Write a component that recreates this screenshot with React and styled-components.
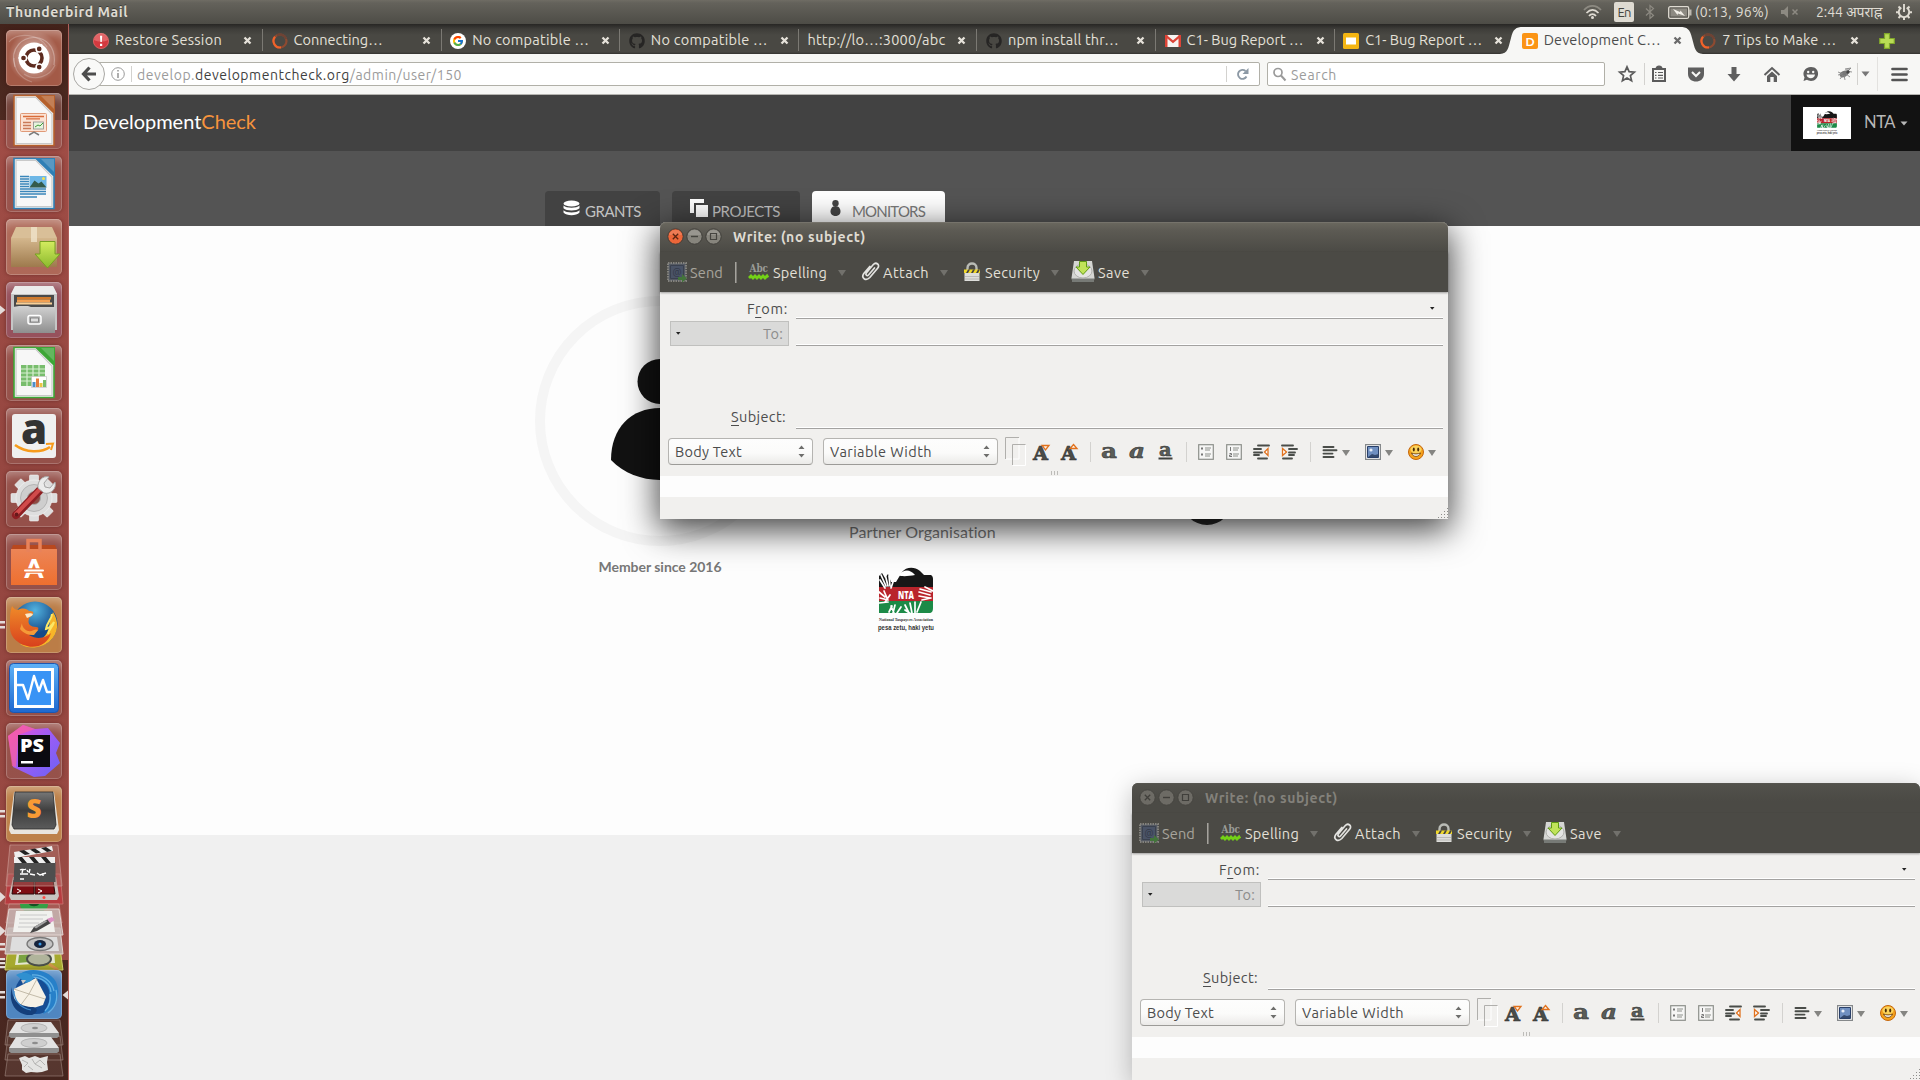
import React, { useLayoutEffect, useRef, useState } from "react";
import styled, { createGlobalStyle, css } from "styled-components";
import { FaGithub } from "react-icons/fa";
import { FcGoogle } from "react-icons/fc";

const uiFont = `"Ubuntu", "Noto Sans", "Open Sans", "Noto Sans Devanagari", sans-serif`;
const siteFont = `Lato, "Open Sans", sans-serif`;

const Global = createGlobalStyle`
  * { box-sizing: border-box; }
  body { margin: 0; background: #f0f0f0; overflow: hidden; }
  svg { display: block; flex: none; overflow: visible; }
`;

/* ---------- text that keeps a given width ---------- */
const FitSpan = styled.span`
  display: inline-block;
  white-space: pre;
  flex: none;
`;
function Fit({ w, children }) {
  const ref = useRef(null);
  const [ls, setLs] = useState(0);
  useLayoutEffect(() => {
    const el = ref.current;
    const n = Math.max(1, el.textContent.length);
    setLs((w - el.getBoundingClientRect().width) / n);
  }, [w]);
  return (
    <FitSpan ref={ref} style={{ letterSpacing: `${ls}px` }}>
      {children}
    </FitSpan>
  );
}

/* ---------- desktop ---------- */
const Desktop = styled.div`
  position: relative;
  width: 1920px;
  height: 1080px;
  overflow: hidden;
  display: flex;
  flex-direction: column;
  font-family: ${uiFont};
  font-size: 14.5px;
  line-height: 20px;
`;
const TopBar = styled.header`
  height: 24px;
  flex: none;
  display: flex;
  align-items: center;
  justify-content: space-between;
  padding: 0 8px 0 6px;
  color: #dfdbd2;
  background: linear-gradient(#6f6c64 0, #64625b 12%, #4d4c46 100%);
`;
const AppName = styled.div`
  font-weight: 600;
  font-size: 14px;
  text-shadow: 0 -1px 0 rgba(0, 0, 0, 0.4);
`;
const Indicators = styled.div`
  display: flex;
  align-items: center;
  height: 24px;
  font-size: 14px;
`;
const Slot = styled.div`
  width: ${(p) => p.$w}px;
  display: flex;
  align-items: center;
  flex: none;
`;
const Lang = styled.div`
  width: 20px;
  height: 20px;
  border-radius: 2px;
  background: #dfdbd2;
  color: #45443f;
  display: flex;
  align-items: center;
  justify-content: center;
  font-size: 13px;
`;
const Workspace = styled.div`
  flex: 1;
  min-height: 0;
  display: flex;
`;

/* ---------- launcher ---------- */
const LauncherBar = styled.nav`
  width: 69px;
  flex: none;
  display: flex;
  flex-direction: column;
  padding: 6px 0 0 6px;
  border-right: 1px solid #b0605b;
  background: linear-gradient(
    #43231b 0,
    #4f2b22 96px,
    #a04d46 96px,
    #944640 500px,
    #9a4a44 936px,
    #4d2a22 936px,
    #45251e 100%
  );
`;
const Tile = styled.div`
  position: relative;
  width: 56px;
  height: ${(p) => p.$h || 56}px;
  margin-bottom: ${(p) => (p.$gap === undefined ? 7 : p.$gap)}px;
  flex: none;
  border-radius: 5px;
  display: flex;
  align-items: center;
  justify-content: center;
  background: ${(p) => p.$bg || "rgba(150,90,82,.55)"};
  box-shadow: inset 0 0 0 1px rgba(255, 255, 255, 0.2), inset 0 9px 10px -5px rgba(255, 255, 255, 0.35),
    0 0 4px rgba(60, 15, 10, 0.45);
`;
const Pips = styled.svg`
  position: absolute;
  left: -6px;
  top: calc(50% - 5px);
`;
const FocusMark = styled.svg`
  position: absolute;
  right: -6px;
  top: calc(50% - 5px);
`;
const Running = () => (
  <Pips width="6" height="10">
    <path d="M0 .5 5.5 5 0 9.5z" fill="#e4dcda" />
  </Pips>
);
const RunningTwo = () => (
  <Pips width="6" height="10">
    <path d="M0 1h5v2.5H0zM0 6h5v2.5H0z" fill="#e4dcda" />
  </Pips>
);

const UbuntuIcon = () => (
  <svg width="56" height="56" viewBox="0 0 56 56">
    <defs>
      <radialGradient id="ub">
        <stop offset="0" stopColor="#fff" stopOpacity=".75" />
        <stop offset="1" stopColor="#fff" stopOpacity="0" />
      </radialGradient>
    </defs>
    <circle cx="28" cy="27" r="26" fill="url(#ub)" />
    <path d="M9 37C3 18 17 5 33 8c11 3 17 13 15 27" fill="none" stroke="#fff" strokeOpacity=".3" strokeWidth="1.2" />
    <path d="M3 12c8-10 30-9 38 5M18 44c12 8 26 2 31-9M8 28c0 14 9 21 18 24" fill="none" stroke="#fff" strokeOpacity=".22" strokeWidth="1.2" />
    <circle cx="28" cy="28" r="15.5" fill="#fff" />
    <circle cx="28" cy="28" r="8" fill="none" stroke="#5d2b1f" strokeWidth="3.6" />
    <g stroke="#fff" strokeWidth="1.5" fill="#5d2b1f">
      <path d="M24 28H12M30 24.5l6-10.4M30 31.5l6 10.4" strokeWidth="1.2" fill="none" />
      <circle cx="17.5" cy="28" r="3.1" />
      <circle cx="33.2" cy="18.9" r="3.1" />
      <circle cx="33.2" cy="37.1" r="3.1" />
    </g>
  </svg>
);
const DocIcon = ({ color, kind }) => (
  <svg width="56" height="56" viewBox="0 0 56 56">
    <path d="M8 2.5h22L48 20v32.500H8z" fill="#f7f7f7" stroke={color} strokeWidth="1.6" />
    <path d="M10 4.500h20L46 21v29.500H10z" fill="none" stroke="#c9c9c9" strokeWidth="1.2" />
    <path d="M30 2h19v19z" fill={color} />
    <path d="M35 3h13v13z" fill="#fff" opacity=".2" />
    {kind === "slides" && (
      <g>
        <rect x="14.500" y="20.500" width="26" height="18" rx="1" fill="#fbe3d5" stroke="#e09a78" />
        <path d="M17 23.500h21M20 25.800h14" stroke="#d96c3a" strokeWidth="1.3" />
        <path d="M17 29.500h8M17 32.500h8M17 35.500h8" stroke="#c97a58" strokeWidth="1.3" />
        <rect x="27.500" y="29" width="10" height="7" fill="#e7f3de" stroke="#8a8a8a" strokeWidth=".8" />
        <path d="m29 34 3-2 2 1 3-3" fill="none" stroke="#3f9d35" />
        <path d="m23 42 5-3 5 3" fill="none" stroke="#7c7c7c" strokeWidth="1.500" />
      </g>
    )}
    {kind === "text" && (
      <g>
        <path d="M14 20.500h9M14 23h9M14 25.500h9M14 28h9M14 30.500h9M14 33h26M14 35.500h26M14 38h26M14 41h17" stroke="#3a86ba" strokeWidth="1.300" />
        <rect x="23.500" y="20" width="17" height="11.500" fill="#6db7e6" />
        <path d="m23.500 31.500 5-7 4 3 3-2 5 6z" fill="#345b4b" />
        <circle cx="37.500" cy="22.500" r="1.500" fill="#f4e04d" />
      </g>
    )}
    {kind === "sheet" && (
      <g>
        <path d="M15 20h24v21H15z" fill="#78bd6d" />
        <path d="M15 24h24M15 28h24M15 32h24M15 36h24M21 20v21M27 20v21M33 20v21" stroke="#d7efd2" strokeWidth="1.200" />
        <path d="M25.500 31.500h15v11h-15z" fill="#fff" stroke="#bbb" strokeWidth=".6" />
        <path d="M26.500 37h3v5h-3z" fill="#4d8fc9" />
        <path d="M30 33.500h3V42h-3z" fill="#e47d3d" />
        <path d="M33.500 38h3v4h-3z" fill="#e9c643" />
        <path d="M37 35h3v7h-3z" fill="#78bd6d" />
      </g>
    )}
  </svg>
);
const BoxIcon = () => (
  <svg width="56" height="56" viewBox="0 0 56 56">
    <defs>
      <linearGradient id="bx" x2="0" y2="1">
        <stop offset="0" stopColor="#d4b78d" />
        <stop offset="1" stopColor="#9e7a4d" />
      </linearGradient>
      <linearGradient id="gr" x2="0" y2="1">
        <stop offset="0" stopColor="#d3ec5f" />
        <stop offset="1" stopColor="#8ab82c" />
      </linearGradient>
    </defs>
    <path d="M10 8h36l5 11H5z" fill="#d9bf98" />
    <path d="M5 19h46v29H5z" fill="url(#bx)" />
    <path d="M25 8h6v15h-6z" fill="#efe3cb" opacity=".8" />
    <path d="M34 22.500h15V35h5L41.500 49 29 35h5z" fill="url(#gr)" stroke="#76a022" />
  </svg>
);
const CabinetIcon = () => (
  <svg width="56" height="56" viewBox="0 0 56 56">
    <defs>
      <linearGradient id="cb" x2="0" y2="1">
        <stop offset="0" stopColor="#d2d2d2" />
        <stop offset="1" stopColor="#8e8e8e" />
      </linearGradient>
    </defs>
    <path d="M9 4h38l4 8v36H5V12z" fill="#c6c6c6" />
    <path d="M9 4h38l4 8H5z" fill="#ebebeb" />
    <path d="M8 13h40v14H8z" fill="#4a4a4a" />
    <path d="M11 15h34v2.500H11z" fill="#d07a2d" />
    <path d="M11 17.500h33v3H11z" fill="#f2a052" />
    <path d="M10 20.500h36v2H10z" fill="#f8cf96" />
    <path d="M7 25l6-1h9l3 1h24v26H7z" fill="url(#cb)" />
    <rect x="22" y="33.500" width="13" height="8.500" rx="2" fill="#b3b3b3" stroke="#fff" strokeWidth="1.500" />
    <rect x="24.500" y="36" width="8" height="4" fill="#ddd" stroke="#777" strokeWidth=".8" />
  </svg>
);
const AmazonIcon = () => (
  <svg width="56" height="56" viewBox="0 0 56 56">
    <rect x="6" y="6" width="44" height="44" rx="3" fill="#f0f0f0" />
    <text x="28" y="36" textAnchor="middle" fontFamily="Open Sans, sans-serif" fontWeight="800" fontSize="42" fill="#333">a</text>
    <path d="M9 37c11 8 26 8 35 2" fill="none" stroke="#f79b1c" strokeWidth="2.600" />
    <path d="m40 36 7-.500-2 6.500" fill="none" stroke="#f79b1c" strokeWidth="2" />
  </svg>
);
const SettingsIcon = () => (
  <svg width="56" height="56" viewBox="0 0 56 56">
    <g fill="#dedede" stroke="#f3f3f3" strokeWidth=".6">
      {[0, 45, 90, 135].map((a) => (
        <rect key={a} x="23.500" y="4" width="9" height="46" rx="1" transform={`rotate(${a} 28 27)`} />
      ))}
      <circle cx="28" cy="27" r="18" />
    </g>
    <circle cx="28" cy="27" r="13.500" fill="#cecece" stroke="#b4b4b4" />
    <circle cx="28" cy="27" r="6.500" fill="#8e4a43" stroke="#aaa" />
    <path d="m10 44 24-25" stroke="#8e1f23" strokeWidth="8" strokeLinecap="round" />
    <path d="m10 43 24-25" stroke="#d14b4b" strokeWidth="4" strokeLinecap="round" />
    <path d="M32 17c-1-7 5-13 11-11l-5 6 1 4 5 1 5-6c2 6-4 13-11 11z" fill="#ebebeb" stroke="#a5a5a5" />
    <circle cx="10.500" cy="43.500" r="2" fill="#66191b" />
  </svg>
);
const SoftwareIcon = () => (
  <svg width="56" height="56" viewBox="0 0 56 56">
    <defs>
      <linearGradient id="sw" x2="0" y2="1">
        <stop offset="0" stopColor="#ec8557" />
        <stop offset="1" stopColor="#ee6f2f" />
      </linearGradient>
    </defs>
    <path d="M7 11h42l2 5H5z" fill="#b9481e" />
    <path d="M5 15h46v36H5z" fill="url(#sw)" />
    <path d="M22 18V6.500h12V18" fill="none" stroke="#e8825a" strokeWidth="3.500" />
    <text x="28" y="43.500" textAnchor="middle" fontFamily="Lato, sans-serif" fontWeight="900" fontSize="27" fill="#fff">A</text>
    <path d="M20 36.500h16" stroke="#ee7840" strokeWidth="4.500" />
    <path d="M19 36.500h18" stroke="#fff" strokeWidth="2" strokeLinecap="round" />
  </svg>
);
const FirefoxIcon = () => (
  <svg width="56" height="56" viewBox="0 0 56 56">
    <defs>
      <radialGradient id="ffb" cx=".5" cy=".2">
        <stop offset="0" stopColor="#52b3e0" />
        <stop offset="1" stopColor="#164a88" />
      </radialGradient>
      <linearGradient id="ffo" x2="0" y2="1">
        <stop offset="0" stopColor="#ef8b29" />
        <stop offset="1" stopColor="#d8401d" />
      </linearGradient>
    </defs>
    <circle cx="29" cy="27" r="22.500" fill="url(#ffb)" />
    <path d="M47 15c6 9 6 21-3 29-8 7-21 9-30 3 10 1 18-1 23-6 8-7 5-15 10-26z" fill="#f7b528" />
    <path d="M46 17c0 5-5 8-6 15 4-1 6-4 8-7-1 5-5 7-6 12" fill="none" stroke="#fce765" strokeWidth="2" />
    <path d="M6 9c2 3 4 4 6 4 5-3 9-1 11 1 4 0 5 1 4 3-1 3-4 3-4 5-2 5 2 8 7 8 2 0 3 1 2 3-3 4-9 5-9 5 8 5 17 3 22-2-3 11-14 16-24 13C9 46 3 38 4 27c0-8 0-12 2-18z" fill="url(#ffo)" />
    <path d="M19 17c3-1 7-1 8 0-1 3-5 3-6 4z" fill="#fbe9cb" />
    <path d="M14 32c4 5 9 6 14 6l4-5c-3-2-5 2-10 1-3-1-6-4-6-8z" fill="#f59a38" />
  </svg>
);
const MonitorIcon = () => (
  <svg width="56" height="56" viewBox="0 0 56 56">
    <defs>
      <linearGradient id="mo" x2="0" y2="1">
        <stop offset="0" stopColor="#5fb2f7" />
        <stop offset="1" stopColor="#1f68cf" />
      </linearGradient>
    </defs>
    <rect x="3.500" y="3.500" width="49" height="49" rx="4" fill="url(#mo)" stroke="#1b57b2" />
    <rect x="9.500" y="9.500" width="37" height="37" fill="#3893f5" stroke="#fff" strokeWidth="3" />
    <path d="M11 25h6l5 14 6-23 5 15 4-11 4 12h5" fill="none" stroke="#fff" strokeWidth="2.400" strokeLinejoin="round" />
  </svg>
);
const PhpStormIcon = () => (
  <svg width="56" height="56" viewBox="0 0 56 56">
    <defs>
      <linearGradient id="ps" x2="1" y2="1">
        <stop offset="0" stopColor="#f650cf" />
        <stop offset=".45" stopColor="#a15cf5" />
        <stop offset="1" stopColor="#6a62f6" />
      </linearGradient>
    </defs>
    <path d="M2 13 17 2l12 4 13-1 12 15-4 10 4 10-15 13-11 1-21-10z" fill="url(#ps)" />
    <path d="M2 13 17 2l12 4-17 6-2 32-4-1z" fill="#fa5f9d" opacity=".7" />
    <rect x="12" y="12" width="32" height="32" fill="#0b0a10" />
    <text x="14" y="29" fontFamily="Open Sans, sans-serif" fontWeight="800" fontSize="18" textLength="24" lengthAdjust="spacingAndGlyphs" fill="#fff">PS</text>
    <path d="M15 38h12v2.500H15z" fill="#fff" />
  </svg>
);
const SublimeIcon = () => (
  <svg width="56" height="56" viewBox="0 0 56 56">
    <defs>
      <linearGradient id="su" x2="0" y2="1">
        <stop offset="0" stopColor="#777" />
        <stop offset=".5" stopColor="#3e3e3e" />
        <stop offset="1" stopColor="#5b5b5b" />
      </linearGradient>
    </defs>
    <path d="M8 6h40l5 38-2 4H5l-2-4z" fill="#e9e5dd" />
    <path d="M9 6h38l3 33-2 4H8l-2-4z" fill="url(#su)" stroke="#2b2b2b" strokeWidth=".8" />
    <text x="28" y="31.500" textAnchor="middle" fontFamily="Open Sans, sans-serif" fontWeight="800" fontSize="26" fill="#f89a34">S</text>
  </svg>
);
const ThunderbirdIcon = () => (
  <svg width="56" height="49" viewBox="0 0 56 49">
    <circle cx="30" cy="23" r="21" fill="#164d94" />
    <path d="M14 4C23-3 43-1 50 12c6 13 0 27-13 32 5-8 8-14 6-24C40 10 29 6 20 8z" fill="#2780c9" />
    <path d="M20 8c10-3 24 2 25 14M26 5c10-1 20 6 22 16M42 43c8-6 10-14 8-23M44 24c1 7-1 13-5 17" fill="none" stroke="#63b0e4" strokeWidth="1.300" />
    <path d="m8 19 22-11 10 19-3 8-16 5-13-6z" fill="#f6f1e6" />
    <path d="m8 19 15 5 8-15M23 24l-9 12M23 24l16 5" fill="none" stroke="#c3bba9" />
    <path d="M6 17c-1 14 9 20 21 20 7 1 3 8-2 8C12 46 1 34 6 17z" fill="#143f7b" />
    <path d="M8 21c0 9 6 17 17 19" fill="none" stroke="#3f8cce" strokeWidth="1.200" />
    <path d="M10 5c7-4 14-2 18 3-5 6-10 6-13 1z" fill="#3090d0" />
    <path d="m15 10 2 4 3-4z" fill="#c8c8c8" />
  </svg>
);
const FoldedApps = styled.svg`
  margin: -5px 0 0 -6px;
`;
const Stack = () => (
  <FoldedApps width="68" height="126" viewBox="0 0 68 126">
    <g>
      {/* terminal */}
      <path d="M8 30h52l3 30H5z" fill="#b73c40" stroke="#cf7a76" strokeWidth=".7" />
      <path d="M13 33h43l3 19-2 4H11l-2-4z" fill="#c8c4c0" />
      <path d="M14 36h20v14H12zM35 36h18l2 14H35z" fill="#7e0d13" stroke="#2c0808" />
      <path d="m17 45 4 2-4 2M38 45l4 2-4 2" fill="none" stroke="#fff" />
      <circle cx="44" cy="53.500" r="1.500" fill="#ff4b43" />
      {/* clapper */}
      <path d="M10 1h48l4 41H6z" fill="#b07871" fillOpacity=".45" stroke="#d4a49d" strokeOpacity=".6" />
      <path d="M14.500 18h41v20H13.500z" fill="#4e4e4e" />
      <path d="M14 13h41v6H14z" fill="#eee" />
      <path d="m17 13 5 6h5l-5-6zM29 13l5 6h5l-5-6zM41 13l5 6h5l-5-6z" fill="#222" />
      <path d="m14 8 38-6 1 5-38 7z" fill="#eee" />
      <path d="m19 7 6 4 5-1-6-4zM30 5.500l6 4 5-1-6-4zM41 4l6 4 5-1-6-4z" fill="#222" />
      <path d="M20 26c3-2 3 1 6-1m-3 0-1 4m5-3 1 2m2-3-1 4M20 30h8m2 0 5 1m2-2 3 2 6-2M20 35h4M43 29v3" fill="none" stroke="#fff" strokeWidth="1.400" />
    </g>
    <g>
      {/* green face */}
      <path d="M9 60h50l3 19H6z" fill="#a85d58" fillOpacity=".9" stroke="#d4a49d" strokeOpacity=".6" />
      <path d="M20 60h28c0 6-6 11-14 11s-14-5-14-11z" fill="#35a046" />
      <path d="M29 60h10c-1 3-9 3-10 0z" fill="#184e25" />
      <path d="M17 70c2-6 7-4 8 1M51 70c-2-6-7-4-8 1" stroke="#a9945f" strokeWidth="2.500" fill="none" />
      {/* image viewer */}
      <path d="M8 104h52l3 22H5z" fill="#a6a92e" stroke="#d0d46c" />
      <path d="m17 108 37-2 1 13-40 2z" fill="#e4e7cf" />
      <path d="m19 111 12-1-2 8-11 1z" fill="#7ba341" />
      <ellipse cx="39" cy="115" rx="12" ry="6.500" fill="#b0b49b" stroke="#4a4f49" strokeWidth="2" />
      <path d="m49 120 9 6" stroke="#cf9449" strokeWidth="3" />
      {/* camera */}
      <path d="M8 84h52l3 26H5z" fill="#b9aaa6" stroke="#e3d4d0" />
      <path d="M12 93h45l2 14H10z" fill="#dedede" />
      <ellipse cx="40" cy="100" rx="13" ry="6.500" fill="#c4c4c4" stroke="#777" strokeWidth="1.300" />
      <ellipse cx="40" cy="100" rx="6" ry="4" fill="#16233c" />
      <circle cx="40" cy="100" r="1.500" fill="#3b9be8" />
      {/* text editor */}
      <path d="M9 65h50l4 26H5z" fill="#c9bcb9" fillOpacity=".8" stroke="#e3d4d0" />
      <path d="M16 67h36l3 21H13z" fill="#f1f1ee" />
      <path d="M20 71h27M19 75h24M19 79h20M18 83h16" stroke="#c8c8c8" />
      <path d="m30 89 4-6 14-8 3 4-14 8z" fill="#454545" />
      <path d="m34 83 12-7 1 1.500-11 7z" fill="#a3a3a3" />
      <path d="m47 75 5-2 3 3-5 3z" fill="#dd92c3" />
    </g>
    <path d="M0 48l5.500 5L0 58zM0 82l5.500 5L0 92zM0 99h5v2.500H0zM0 104h5v2.500H0zM0 114h5v2.200H0zM0 118h5v2.200H0zM0 122h5v2.200H0z" fill="#e4dcda" />
  </FoldedApps>
);
const Bottom = styled.svg`
  margin-left: -6px;
`;
const Drives = () => (
  <Bottom width="68" height="60" viewBox="0 0 68 60">
    <path d="M8 1h52l3 25H5zM8 17h52l3 24H5zM8 35h52l3 22H5z" fill="#9a7d75" fillOpacity=".2" stroke="#b09a92" strokeOpacity=".5" />
    {[1, 16].map((y) => (
      <g key={y} transform={`translate(0 ${y})`}>
        <path d="M16 2h35l8 11-2 4H11l-2-4z" fill="#e2e2e2" />
        <path d="M9 13h50v3.500l-2 1.500H11l-2-1.500z" fill="#8f8f8f" />
        <ellipse cx="34" cy="8" rx="13" ry="4.500" fill="#cfcfcf" stroke="#b5b5b5" />
        <ellipse cx="35" cy="8" rx="3" ry="1.300" fill="#8d8d8d" />
      </g>
    ))}
    <path d="m19 39 6-2 4 2 6-2 5 2 8-2-1 6 1 8-6 2-5 .500-6-.500-5 1-4-3 0-5z" fill="#e4e4e2" />
    <path d="m22 41 6 3-4 4m8-8 3 5 5-4m-5 4 7 4m-2-8 5 5m-17 1 5 4" fill="none" stroke="#b5b5b3" />
  </Bottom>
);

function Launcher() {
  return (
    <LauncherBar>
      <Tile $bg="#a35a47"><UbuntuIcon /></Tile>
      <Tile><DocIcon color="#b5602c" kind="slides" /></Tile>
      <Tile><DocIcon color="#2f7fb5" kind="text" /></Tile>
      <Tile $bg="rgba(180,115,95,.75)"><BoxIcon /></Tile>
      <Tile $bg="#96515c"><Running /><CabinetIcon /></Tile>
      <Tile><DocIcon color="#3da636" kind="sheet" /></Tile>
      <Tile><AmazonIcon /></Tile>
      <Tile><SettingsIcon /></Tile>
      <Tile><SoftwareIcon /></Tile>
      <Tile $bg="#bb7d47"><RunningTwo /><FirefoxIcon /></Tile>
      <Tile><MonitorIcon /></Tile>
      <Tile><PhpStormIcon /></Tile>
      <Tile $bg="#bd8149"><RunningTwo /><SublimeIcon /></Tile>
      <Stack />
      <Tile $h={49} $gap={0} $bg="#4f86c0">
        <RunningTwo />
        <ThunderbirdIcon />
        <FocusMark width="6" height="10"><path d="M6 .5.5 5 6 9.500z" fill="#e4dcda" /></FocusMark>
      </Tile>
      <Drives />
    </LauncherBar>
  );
}

/* ---------- browser ---------- */
const Browser = styled.main`
  flex: 1;
  min-width: 0;
  display: flex;
  flex-direction: column;
`;
const TabStrip = styled.div`
  height: 30px;
  flex: none;
  display: flex;
  align-items: center;
  padding-left: 14.500px;
  background: linear-gradient(#272624 0, #3e3d39 5px, #494843 11px, #494843 28px, #33322f 30px);
`;
const TabBox = styled.div`
  position: relative;
  width: 178.600px;
  height: 30px;
  flex: none;
  display: flex;
  align-items: center;
  padding: 3px 10px 0 9.500px;
  gap: 6px;
  color: ${(p) => (p.$active ? "#4c4c4c" : "#e4e0d8")};
  z-index: ${(p) => (p.$active ? 1 : 0)};
  > * { position: relative; }
  > ${FitSpan} { margin-top: -2px; }
  ${(p) =>
    p.$line &&
    css`
      &::before {
        content: "";
        position: absolute;
        left: 0;
        top: 5px;
        height: 22px;
        width: 1px;
        background: #7b7973;
      }
    `}
`;
const TabShape = styled.svg`
  && {
    position: absolute;
    left: -12px;
    top: 2px;
  }
`;
const Push = styled.span`
  flex: 1;
`;
const TabClose = ({ active }) => (
  <svg width="9" height="9" viewBox="0 0 9 9">
    <path d="M1.500 1.500l6 6M7.500 1.500l-6 6" stroke={active ? "#6a6a6a" : "#e6e2da"} strokeWidth="2.300" />
  </svg>
);
const NewTab = styled.div`
  padding: 3px 0 0 10px;
`;

const TabIcon = ({ kind }) => {
  if (kind === "github") return <FaGithub size={16} color="#262524" />;
  if (kind === "google")
    return (
      <svg width="16" height="16" viewBox="0 0 16 16">
        <circle cx="8" cy="8" r="8" fill="#fff" />
        <FcGoogle x="2" y="2" size={12} />
      </svg>
    );
  return (
    <svg width="16" height="16" viewBox="0 0 16 16">
      {kind === "error" && (
        <g>
          <circle cx="8" cy="8" r="7.600" fill="#d3393f" stroke="#e46a6a" strokeWidth=".8" />
          <path d="M1 7a7 7 0 0 1 14 0c-4 2-10 2-14 0z" fill="#f08d8d" opacity=".5" />
          <path d="M7 2.800h2.200L8.800 9H7.400zM7 10.800h2.200V13H7z" fill="#fff" />
        </g>
      )}
      {kind === "spin" && (
        <g fill="none" strokeWidth="2.200">
          <circle cx="8" cy="8" r="6.500" stroke="#8d4a31" />
          <path d="M3 3.800A6.500 6.500 0 0 0 9 14.400" stroke="#f0632b" />
          <path d="M5 2.200A6.500 6.500 0 0 1 14.200 6" stroke="#6d4335" />
        </g>
      )}
      {kind === "gmail" && (
        <g>
          <path d="M0 2h16v12H0z" fill="#f6f4f2" />
          <path d="M0 2h2.500v12H0zM13.500 2H16v12h-2.500z" fill="#dc4437" />
          <path d="m1 2.800 7 6 7-6" fill="none" stroke="#dc4437" strokeWidth="2.200" />
        </g>
      )}
      {kind === "slides" && (
        <g>
          <rect width="16" height="16" rx="1.500" fill="#f4b512" />
          <rect x="3" y="4.500" width="10" height="7" fill="#fff" />
        </g>
      )}
      {kind === "d" && (
        <g>
          <rect width="16" height="16" rx="2" fill="#fb9414" />
          <text x="8" y="12.500" textAnchor="middle" fontFamily="Lato" fontSize="12" fontWeight="700" fill="#fff">D</text>
        </g>
      )}
    </svg>
  );
};
const tabs = [
  { icon: "error", label: "Restore Session", w: 107 },
  { icon: "spin", label: "Connecting…", w: 89, line: true },
  { icon: "google", label: "No compatible …", w: 117, line: true },
  { icon: "github", label: "No compatible …", w: 117, line: true },
  { label: "http://lo…:3000/abc", w: 138, line: true },
  { icon: "github", label: "npm install thr…", w: 111, line: true },
  { icon: "gmail", label: "C1- Bug Report …", w: 117, line: true },
  { icon: "slides", label: "C1- Bug Report …", w: 117, line: true },
  { icon: "d", label: "Development C…", w: 117, active: true },
  { icon: "spin", label: "7 Tips to Make …", w: 114 },
];

const NavBar = styled.div`
  height: 41px;
  flex: none;
  display: flex;
  align-items: center;
  padding: 0 0 0 4px;
  background: #f7f7f5;
  border-bottom: 1px solid #b5b4b0;
`;
const BackButton = styled.div`
  width: 32px;
  height: 32px;
  flex: none;
  border: 1px solid #a9a8a4;
  border-radius: 50%;
  background: #f9f9f8;
  display: flex;
  align-items: center;
  justify-content: center;
  position: relative;
  z-index: 1;
`;
const Field = styled.div`
  height: 24px;
  width: ${(p) => p.$w}px;
  margin-left: ${(p) => p.$ml}px;
  padding-left: ${(p) => p.$pl}px;
  flex: none;
  display: flex;
  align-items: center;
  border: 1px solid #b1b0a8;
  border-radius: 2px;
  background: #fff;
  color: #9b9b9b;
  font-size: 14px;
  b { font-weight: 400; color: #3f3f3f; }
  > ${FitSpan} { margin-top: 1px; }
`;
const VLine = styled.i`
  width: 1px;
  height: ${(p) => p.$h || 16}px;
  background: ${(p) => p.$c || "#d3d2cf"};
  margin: 0 ${(p) => p.$mr || 0}px 0 ${(p) => p.$ml || 0}px;
  flex: none;
`;
const Tool = styled.div`
  width: ${(p) => p.$w || 38}px;
  display: flex;
  align-items: center;
  justify-content: center;
  flex: none;
`;

function NavigationBar() {
  return (
    <NavBar>
      <BackButton>
        <svg width="16" height="16" viewBox="0 0 16 16">
          <path d="M8.500 1.500 2.500 8l6 6.500M3 8h12" fill="none" stroke="#4d4d4d" strokeWidth="3.200" />
        </svg>
      </BackButton>
      <Field $w={1164} $ml={-9} $pl={14}>
        <svg width="14" height="14" viewBox="0 0 14 14">
          <circle cx="7" cy="7" r="6.300" fill="none" stroke="#9a9a9a" />
          <path d="M6.200 3h1.600v1.600H6.200zM6.200 6h1.600v5H6.200z" fill="#9a9a9a" />
        </svg>
        <VLine $ml={6} $mr={5} />
        <Fit w={325}>develop.<b>developmentcheck.org</b>/admin/user/150</Fit>
        <Push />
        <VLine $mr={9} />
        <svg width="14" height="14" viewBox="0 0 14 14">
          <path d="M10.500 9.500A4.500 4.500 0 1 1 9.500 4" fill="none" stroke="#8d99a5" strokeWidth="1.900" />
          <path d="M12.500 1v6h-6z" fill="#8d99a5" />
        </svg>
        <VLine $c="transparent" $ml={8} />
      </Field>
      <Field $w={338} $ml={7} $pl={4}>
        <svg width="15" height="15" viewBox="0 0 15 15">
          <circle cx="6" cy="5.500" r="4" fill="none" stroke="#9a9a9a" strokeWidth="1.700" />
          <path d="m9 8.500 4.500 5" stroke="#9a9a9a" strokeWidth="2" />
        </svg>
        <VLine $c="transparent" $ml={3} />
        <Fit w={46}>Search</Fit>
      </Field>
      <VLine $c="transparent" $ml={3} />
      <Tool $w={35}>
        <svg width="18" height="18" viewBox="0 0 18 18">
          <path d="m9 1.800 2.100 4.800 5.300.5-4 3.500 1.200 5.200L9 13l-4.600 2.800 1.200-5.200-4-3.500 5.300-.5z" fill="none" stroke="#5b5b5b" strokeWidth="1.700" />
        </svg>
      </Tool>
      <VLine $h={22} />
      <Tool $w={28}>
        <svg width="16" height="18" viewBox="0 0 16 18">
          <path d="M2 4h12v12H2z" fill="none" stroke="#5b5b5b" strokeWidth="2" />
          <path d="M5 4a3 3 0 0 1 6 0zM4 7.500h1.500M7 7.500h5M4 10.300h1.500M7 10.300h5M4 13h1.500M7 13h5" stroke="#5b5b5b" strokeWidth="1.200" fill="#5b5b5b" />
        </svg>
      </Tool>
      <Tool $w={46}>
        <svg width="18" height="17" viewBox="0 0 18 17">
          <path d="M1 1.500h16V8c0 10-16 10-16 0z" fill="#5f5f5f" />
          <path d="m5 6 4 4 4-4" fill="none" stroke="#f7f7f5" strokeWidth="2" />
        </svg>
      </Tool>
      <Tool $w={30}>
        <svg width="16" height="16" viewBox="0 0 16 16"><path d="M5.500 1h5v7h4L8 15.500 1.500 8h4z" fill="#5f5f5f" /></svg>
      </Tool>
      <Tool $w={46}>
        <svg width="18" height="17" viewBox="0 0 18 17">
          <path d="m1.500 9 7.500-7 7.500 7" fill="none" stroke="#5f5f5f" strokeWidth="2" />
          <path d="m4 10 5-4.500 5 4.500V16h-3.300v-5H7.300v5H4z" fill="#5f5f5f" />
        </svg>
      </Tool>
      <Tool $w={30}>
        <svg width="17" height="17" viewBox="0 0 17 17">
          <path d="M9 1c10 0 9 14 0 14-1.500 0-3-.500-4-1.200L1.500 15l1-3.500C-.5 6.500 3 1 9 1z" fill="#5f5f5f" />
          <circle cx="6.200" cy="6" r="1.200" fill="#f7f7f5" /><circle cx="11.200" cy="6" r="1.200" fill="#f7f7f5" />
          <path d="M4.500 8.500h8.500c-.500 5-8 5-8.500 0z" fill="#f7f7f5" />
        </svg>
      </Tool>
      <Tool $w={40}>
        <svg width="16" height="16" viewBox="0 0 16 16">
          <ellipse cx="7" cy="8" rx="4.500" ry="3" transform="rotate(-25 7 8)" fill="#777" />
          <path d="m1 6 5 2M3 13l3-4M8 14l-1-5M13 11 9 8M8 3l6-1-4 4M1 9l4-1M9 5l6 1" stroke="#888" fill="#bbb" strokeWidth=".9" />
          <circle cx="11" cy="6" r="1.700" fill="#444" />
        </svg>
      </Tool>
      <VLine $h={22} $mr={3} $ml={-8} />
      <svg width="9" height="6" viewBox="0 0 9 6"><path d="M.5.5h8l-4 5z" fill="#777" /></svg>
      <VLine $h={34} $ml={7} $c="#e3e2df" />
      <Tool $w={42}>
        <svg width="17" height="15" viewBox="0 0 17 15"><path d="M1.500 2h14M1.500 7.500h14M1.500 13h14" stroke="#545454" strokeWidth="2.700" strokeLinecap="round" /></svg>
      </Tool>
    </NavBar>
  );
}

/* ---------- website ---------- */
const SiteHeader = styled.div`
  height: 56px;
  flex: none;
  display: flex;
  align-items: center;
  justify-content: space-between;
  padding-left: 14px;
  background: #424242;
  font-family: ${siteFont};
`;
const Brand = styled.div`
  font-size: 20px;
  color: #fff;
  padding-bottom: 4px;
  em { font-style: normal; color: #f7943d; }
`;
const Account = styled.div`
  width: 129px;
  height: 56px;
  display: flex;
  align-items: center;
  padding-left: 12px;
  background: #121212;
  color: #b8b8b8;
  font-size: 16.500px;
  > ${FitSpan} { margin-top: -2px; }
`;
const Thumb = styled.div`
  width: 48px;
  height: 32px;
  background: #fff;
  display: flex;
  justify-content: center;
  align-items: center;
  margin-right: 13px;
`;
const SubHeader = styled.div`
  height: 75px;
  flex: none;
  display: flex;
  align-items: flex-end;
  gap: 12px;
  padding-left: 476px;
  background: #545454;
  font-family: ${siteFont};
`;
const SiteTab = styled.div`
  width: ${(p) => p.$w}px;
  height: 35px;
  display: flex;
  align-items: center;
  padding: 5px 0 0 ${(p) => p.$pl}px;
  gap: ${(p) => p.$gap}px;
  border-radius: 4px 4px 0 0;
  font-size: 15px;
  color: ${(p) => (p.$on ? "#7b7b7b" : "#c3c3c3")};
  background: ${(p) => (p.$on ? "#fff" : "#424242")};
  svg { margin-top: -6px; }
`;
const Content = styled.section`
  height: 609px;
  flex: none;
  display: flex;
  align-items: flex-start;
  padding: 70px 0 0 466px;
  background: #fdfdfd;
  font-family: ${siteFont};
  color: #777;
`;
const Profile = styled.div`
  width: 250px;
  margin-right: 64px;
  display: flex;
  flex-direction: column;
  align-items: center;
  gap: 11px;
  font-size: 14px;
  font-weight: 700;
`;
const Partner = styled.div`
  width: 333px;
  padding-top: 226px;
  font-size: 16px;
  svg { margin: 25px 0 0 27px; }
`;
const Badge = styled.div`
  width: 50px;
  height: 50px;
  margin-top: 179px;
  border-radius: 50%;
  background: #2b2b2b;
`;
const NtaLogo = ({ w, h }) => (
  <svg width={w} height={h} viewBox="0 0 60 66">
    <path d="M3 9 6 6l3 5 3-4 3 8h5l6-10c4-5 12-6 18-1l4 4h7c2 1 2 3 2 5v7H3z" fill="#171717" />
    <path d="M22 8c6-6 12-6 17 0-6 1-13 2-17 0z" fill="#fff" />
    <path d="M3 20h54v14H3z" fill="#b9252c" />
    <path d="M3 34h54v7c0 3-1 5-4 5H3z" fill="#1c8a47" />
    <text x="22" y="31.500" fontFamily="Open Sans, sans-serif" fontWeight="800" fontSize="10" textLength="16" lengthAdjust="spacingAndGlyphs" fill="#fff">NTA</text>
    <g fill="none" stroke="#fff" strokeWidth="1.700" strokeLinecap="round">
      <path d="m5 8 5 11M9 7l3 12M13 9l1 10M4 13l5 8M18 12l-3 9" />
      <path d="m44 22 11 3M43 25l11 3M43 29l11 2M46 33l9-2M49 20l8 4" />
      <path d="m3 25 6 5M8 24l3 7M4 31l8 2M14 28l-5 7M3 36l9-1" />
      <path d="m13 45 3-6M17 46l2-8M21 46l4-6M15 39l3 7" />
      <path d="m29 38 4 8M34 36l2 10M39 35v11M45 35l-4 10M29 43l6 4" />
    </g>
    <text x="3" y="54" fontFamily="Liberation Serif, serif" fontWeight="700" fontSize="5" textLength="54" lengthAdjust="spacingAndGlyphs" fill="#333">National Taxpayers Association</text>
    <text x="2" y="62.500" fontFamily="Liberation Sans, sans-serif" fontWeight="700" fontSize="8" textLength="56" lengthAdjust="spacingAndGlyphs" fill="#333">pesa zetu, haki yetu</text>
  </svg>
);

function Site() {
  return (
    <>
      <SiteHeader>
        <Brand><Fit w={173}>Development<em>Check</em></Fit></Brand>
        <Account>
          <Thumb><NtaLogo w={22} h={26} /></Thumb>
          <Fit w={31}>NTA</Fit>
          <VLine $c="transparent" $ml={4} />
          <svg width="8" height="5"><path d="M.5.500h7L4 4.500z" fill="#b8b8b8" /></svg>
        </Account>
      </SiteHeader>
      <SubHeader>
        <SiteTab $w={115} $pl={18} $gap={5}>
          <svg width="17" height="17" viewBox="0 0 17 17" fill="#fff">
            <ellipse cx="8.500" cy="3.500" rx="8" ry="3" />
            <path d="M.5 5.500c3 3 13 3 16 0v2.700c-3 3-13 3-16 0zM.500 10.200c3 3 13 3 16 0v2.300c-3 3.500-13 3.500-16 0z" />
          </svg>
          <Fit w={56}>GRANTS</Fit>
        </SiteTab>
        <SiteTab $w={128} $pl={18} $gap={4}>
          <svg width="18" height="18" viewBox="0 0 18 18" fill="#fff">
            <path d="M0 0h14v4H4v10H0zM6 6h12v12H6z" />
          </svg>
          <Fit w={68}>PROJECTS</Fit>
        </SiteTab>
        <SiteTab $w={133} $pl={18} $gap={11} $on>
          <svg width="11" height="16" viewBox="0 0 11 16" fill="#444">
            <circle cx="5.500" cy="3.200" r="3.200" />
            <path d="M5.500 6C9 6 10.500 9 10.500 11.500c0 6-10 6-10 0C.500 9 2 6 5.500 6z" />
          </svg>
          <Fit w={73}>MONITORS</Fit>
        </SiteTab>
      </SubHeader>
      <Content>
        <Profile>
          <svg width="250" height="250" viewBox="0 0 250 250">
            <circle cx="125" cy="125" r="120" fill="none" stroke="#f5f5f5" strokeWidth="10" />
            <circle cx="125" cy="85.500" r="22.500" fill="#121212" />
            <path d="M76 164c0-32 20-52 49-52s49 20 49 52c-26 26-72 27-98 0z" fill="#121212" />
          </svg>
          <Fit w={123}>Member since 2016</Fit>
        </Profile>
        <Partner>
          <Fit w={147}>Partner Organisation</Fit>
          <NtaLogo w={60} h={66} />
        </Partner>
        <Badge />
      </Content>
    </>
  );
}

/* ---------- mail compose window ---------- */
const Win = styled.section`
  position: absolute;
  left: ${(p) => p.$x}px;
  top: ${(p) => p.$y}px;
  width: 788px;
  height: 297px;
  display: flex;
  flex-direction: column;
  border-radius: 6px 6px 0 0;
  background: #f1f0ee;
  box-shadow: ${(p) => (p.$active ? "0 9px 34px 2px rgba(0,0,0,.75)" : "0 6px 26px rgba(0,0,0,.26)")};
  color: #4c4c4c;
  z-index: 2;
`;
const TitleBar = styled.div`
  height: 30px;
  flex: none;
  display: flex;
  align-items: center;
  padding: 0 0 1px 7px;
  gap: 2px;
  border-radius: 6px 6px 0 0;
  font-weight: 700;
  font-size: 14px;
  color: ${(p) => (p.$active ? "#dfdbd2" : "#83817b")};
  background: ${(p) => (p.$active ? "linear-gradient(#6b685f, #5c5a53 30%, #4b4a45)" : "linear-gradient(#53524c, #4b4a45 60%)")};
  box-shadow: inset 0 1px 0 ${(p) => (p.$active ? "#76736b" : "#56554f")};
`;
const WinTitle = styled.div`
  padding-left: 9px;
`;
const ToolBar = styled.div`
  height: 40px;
  flex: none;
  display: flex;
  align-items: center;
  background: #4b4a45;
  color: #e4e0d8;
  box-shadow: 0 1px 2px rgba(0, 0, 0, 0.35);
`;
const ToolItem = styled.div`
  width: ${(p) => p.$w}px;
  padding-left: ${(p) => p.$pl || 0}px;
  display: flex;
  align-items: center;
  flex: none;
  opacity: ${(p) => (p.$off ? 0.6 : 1)};
  > ${FitSpan} { margin-top: 2px; }
`;
const IconCell = styled.span`
  width: ${(p) => p.$w}px;
  display: flex;
  flex: none;
`;
const Arrow = styled.i`
  width: 0;
  height: 0;
  margin: 2px 0 0 ${(p) => p.$ml}px;
  border: 4px solid transparent;
  border-top: 6px solid ${(p) => p.$c || "#72716c"};
  border-bottom: 0;
  flex: none;
`;
const FieldRow = styled.div`
  height: ${(p) => p.$h}px;
  flex: none;
  display: grid;
  grid-template-columns: 129px 1fr;
  column-gap: 7px;
  align-items: end;
  padding-right: 5px;
`;
const Label = styled.label`
  justify-self: end;
  padding: 0 ${(p) => p.$pr}px ${(p) => p.$pb}px 0;
  height: ${(p) => 20 + p.$pb}px;
  u { text-underline-offset: 3px; }
`;
const ToBox = styled.div`
  height: 25px;
  margin-left: 10px;
  padding: 0 5px 0 5px;
  display: flex;
  align-items: center;
  justify-content: space-between;
  border: 1px solid #c0c0be;
  background: #dadad9;
  color: #8c8c8b;
`;
const Input = styled.div`
  height: 25px;
  display: flex;
  align-items: center;
  justify-content: flex-end;
  padding: 4px 9px 0 0;
  border-bottom: 1px solid #a3a2a0;
  box-shadow: inset 0 -1px 0 #fff;
`;
const Tiny = () => (
  <svg width="4" height="3"><path d="M0 0h4.500L2.200 2.800z" fill="#222" /></svg>
);
const FormatBar = styled.div`
  height: 41px;
  flex: none;
  display: flex;
  align-items: center;
  padding: 4px 0 0 8px;
`;
const Select = styled.div`
  width: ${(p) => p.$w}px;
  height: 27px;
  flex: none;
  margin-right: ${(p) => p.$mr}px;
  padding: 0 7px 0 6px;
  display: flex;
  align-items: center;
  justify-content: space-between;
  border: 1px solid #b5b4b1;
  border-bottom-color: #9c9b98;
  border-radius: 4px;
  background: linear-gradient(#fdfdfd, #fbfbfa 55%, #ebeae8);
`;
const Btn = styled.div`
  width: ${(p) => p.$w || 28}px;
  height: 27px;
  flex: none;
  display: flex;
  align-items: center;
  justify-content: ${(p) => (p.$w ? "flex-start" : "center")};
  padding-left: ${(p) => (p.$w ? 6 : 0)}px;
`;
const Grip = styled.div`
  height: 6px;
  flex: none;
  display: flex;
  justify-content: center;
  align-items: flex-end;
  padding-bottom: 1px;
  gap: 2px;
  i { width: 1px; height: 4px; background: #bdbcb9; }
`;
const Editor = styled.div`
  height: 21px;
  flex: none;
  background: #fdfdfd;
`;
const StatusBar = styled.div`
  flex: 1;
  display: flex;
  justify-content: flex-end;
  align-items: flex-end;
`;
const Glyph = ({ ch, italic, under }) => (
  <svg width="17" height="18" viewBox="0 0 17 18">
    <text
      x={under ? 2 : 0}
      y={under ? 12.5 : 15}
      textLength={under ? 12.5 : 16}
      lengthAdjust="spacingAndGlyphs"
      fontFamily="DejaVu Serif, serif"
      fontWeight="700"
      fontSize={under ? 18 : 21}
      fontStyle={italic ? "italic" : "normal"}
      fill="#5a5d59"
      stroke="#333"
      strokeWidth=".5"
    >
      {ch}
    </text>
    {under && <path d="M1.500 15.500h14" stroke="#3f413e" strokeWidth="2" />}
  </svg>
);
const SizeGlyph = ({ up }) => (
  <svg width="17" height="18" viewBox="0 0 17 18">
    <text x="0" y="16.500" textLength="15" lengthAdjust="spacingAndGlyphs" fontFamily="DejaVu Serif, serif" fontWeight="700" fontSize="18.500" fill="#4a4d49" stroke="#333" strokeWidth=".6">A</text>
    <path d={up ? "m12.500 1.500 3.500 4H9z" : "M9 2.500h7l-3.500 4.500z"} fill="#fff1e2" stroke="#e0711d" strokeWidth="1.300" />
  </svg>
);
const ListGlyph = ({ num }) => (
  <svg width="16" height="16" viewBox="0 0 16 16">
    <rect x=".7" y=".7" width="14.600" height="14.600" fill="#f6f6f5" stroke="#8d908b" strokeWidth="1.200" />
    <path d="M7 4h6M7 6h5M7 10h6M7 12h5" stroke="#8d908b" />
    <path d={num ? "M4.500 3v4M3.500 9.500h2v1.500h-2v1.500h2.500" : "M3 4.500h2M3 10.500h2"} stroke="#777" strokeWidth={num ? 1 : 2} fill="none" />
  </svg>
);
const DentGlyph = ({ out }) => (
  <svg width="17" height="16" viewBox="0 0 17 16">
    <path
      d={out ? "M5 1.500h11M1 5h7M1 8.500h8M1 11h5M5 14.500h9" : "M1 1.500h11M8 5h8M8 8.500h6M8 11h5M2 14.500h9"}
      stroke="#4a4d49"
      strokeWidth="1.900"
      strokeLinecap="round"
    />
    <path d={out ? "M15 4.500v7L11.500 8z" : "M1.500 4.500v7L5.500 8z"} fill="#fff" stroke="#e0711d" strokeWidth="1.300" />
  </svg>
);
const WinButton = ({ kind, active }) => {
  const red = kind === "close" && active;
  const line = red ? "#5b2410" : active ? "#45443f" : "#403f3b";
  return (
    <svg width="17" height="17" viewBox="0 0 17 17">
      <circle cx="8.500" cy="8.500" r="7.700" fill={red ? "#ec6639" : active ? "#87857d" : "#6d6b65"} stroke={active ? "#3b3a36" : "#45443f"} strokeWidth=".9" />
      {active && <path d="M2 7a6.700 6.700 0 0 1 13 0z" fill="#fff" opacity=".14" />}
      {kind === "close" && <path d="m5.800 5.800 5.400 5.400m0-5.400-5.400 5.400" stroke={line} strokeWidth="1.300" />}
      {kind === "min" && <path d="M5 8.500h7" stroke={line} strokeWidth="1.400" />}
      {kind === "max" && <path d="M5.500 5.500h6v6h-6z" fill="none" stroke={line} strokeWidth="1.200" />}
    </svg>
  );
};

function ComposeWindow({ x, y, active }) {
  return (
    <Win $x={x} $y={y} $active={active}>
      <TitleBar $active={active}>
        <WinButton kind="close" active={active} />
        <WinButton kind="min" active={active} />
        <WinButton kind="max" active={active} />
        <WinTitle><Fit w={133}>Write: (no subject)</Fit></WinTitle>
      </TitleBar>
      <ToolBar>
        <ToolItem $w={75} $pl={7} $off>
          <IconCell $w={23}>
            <svg width="20" height="20" viewBox="0 0 20 20">
              <path d="M1 1h18v18H1z" fill="#5d6578" stroke="#aaa9a4" strokeWidth="2" strokeDasharray="1.500 1" />
              <path d="M3.500 3.500h13v13h-13z" fill="#4a5a7c" stroke="#2f3c57" />
              <text x="10" y="13.500" textAnchor="middle" fontFamily="Open Sans" fontSize="10" fill="#242f4d">@</text>
              <path d="M11 15h4v-3l5 4.500-5 4V18h-4z" fill="#3f9135" />
            </svg>
          </IconCell>
          <Fit w={33}>Send</Fit>
        </ToolItem>
        <VLine $h={21} $c="#a5a39d" />
        <VLine $h={21} $c="#7c7a75" $mr={11} />
        <ToolItem $w={113}>
          <IconCell $w={25}>
            <svg width="21" height="18" viewBox="0 0 21 18">
              <text x="1.500" y="9" fontFamily="DejaVu Serif, serif" fontWeight="700" fontSize="11" textLength="18.500" lengthAdjust="spacingAndGlyphs" fill="#9a9c97">Abc</text>
              <path d="m1 15 2-2 2 2 2-2 2 2 2-2 2 2 2-2 2 2 2-2 1 1.500" fill="none" stroke="#73d216" strokeWidth="2.800" />
            </svg>
          </IconCell>
          <Fit w={54}>Spelling</Fit>
          <Arrow $ml={11} />
        </ToolItem>
        <ToolItem $w={102}>
          <IconCell $w={22}>
            <svg width="19" height="20" viewBox="0 0 19 20">
              <path d="M13.500 6 7.500 13c-1.500 1.500-3.500-.300-2.200-2l7-8.500c3-3 7 .500 4.500 3.500l-8 9.500c-4 4-9 .500-6-4l6-7" fill="none" stroke="#e3e3e0" strokeWidth="1.700" strokeLinecap="round" />
            </svg>
          </IconCell>
          <Fit w={46}>Attach</Fit>
          <Arrow $ml={11} />
        </ToolItem>
        <ToolItem $w={108}>
          <IconCell $w={22}>
            <svg width="18" height="20" viewBox="0 0 18 20">
              <path d="M4.500 9V6c0-6 9-6 9 0v3" fill="none" stroke="#b9bbb5" strokeWidth="2.400" />
              <path d="M1.500 8h15v11h-15z" fill="#dededb" />
              <path d="M1 7.500h16V11H1z" fill="#f0d82b" />
              <path d="m3 11 2-3.500h2L5 11zm5 0 2-3.500h2L10 11zm5 0 2-3.500h2L15 11z" fill="#444" />
              <path d="M2 14.500h14M2 17h14" stroke="#b0b0ad" strokeWidth=".8" />
            </svg>
          </IconCell>
          <Fit w={55}>Security</Fit>
          <Arrow $ml={11} />
        </ToolItem>
        <ToolItem $w={90}>
          <IconCell $w={27}>
            <svg width="24" height="24" viewBox="0 0 24 24">
              <path d="M3 1h18l2.500 17-1 4h-21l-1-4z" fill="#d5d6d3" />
              <path d="M1 18.500h22V22H1z" fill="#777a76" />
              <ellipse cx="12" cy="11" rx="9" ry="7" fill="#e4e4e2" stroke="#b0b0ad" />
              <path d="M8.500 1.500h7V7h3.500L12 14.500 5 7h3.500z" fill="#c0e359" stroke="#5f9a12" />
            </svg>
          </IconCell>
          <Fit w={32}>Save</Fit>
          <Arrow $ml={11} />
        </ToolItem>
      </ToolBar>
      <FieldRow $h={27}>
        <Label $pr={1} $pb={0}><Fit w={41}>F<u>r</u>om:</Fit></Label>
        <Input><Tiny /></Input>
      </FieldRow>
      <FieldRow $h={27}>
        <ToBox><Tiny /><Fit w={20}>To:</Fit></ToBox>
        <Input />
      </FieldRow>
      <FieldRow $h={83}>
        <Label $pr={3} $pb={2}><Fit w={55}><u>S</u>ubject:</Fit></Label>
        <Input />
      </FieldRow>
      <FormatBar>
        <Select $w={145} $mr={10}>
          <Fit w={67}>Body Text</Fit>
          <svg width="7" height="13"><path d="M.5 4h6l-3-3.500zM.5 9h6l-3 3.500z" fill="#6e6e6c" /></svg>
        </Select>
        <Select $w={175} $mr={7}>
          <Fit w={102}>Variable Width</Fit>
          <svg width="7" height="13"><path d="M.5 4h6l-3-3.500zM.5 9h6l-3 3.500z" fill="#6e6e6c" /></svg>
        </Select>
        <IconCell $w={22.5}>
          <svg width="22" height="30" viewBox="0 0 22 30" fill="none">
            <path d="M14 1v21H.500" stroke="#fff" /><path d="M.500 22V.500H14" stroke="#b0afac" />
            <path d="M20.500 8v20.500H7.500" stroke="#fff" /><path d="M7.500 28V7.500h13" stroke="#b0afac" />
          </svg>
        </IconCell>
        <Btn><SizeGlyph /></Btn>
        <Btn><SizeGlyph up /></Btn>
        <VLine $h={20} $ml={6} $mr={5} />
        <Btn><Glyph ch="a" /></Btn>
        <Btn><Glyph ch="a" italic /></Btn>
        <Btn><Glyph ch="a" under /></Btn>
        <VLine $h={20} $ml={6} $mr={5} />
        <Btn><ListGlyph /></Btn>
        <Btn><ListGlyph num /></Btn>
        <Btn><DentGlyph out /></Btn>
        <Btn><DentGlyph /></Btn>
        <VLine $h={20} $ml={6} $mr={5} />
        <Btn $w={43}>
          <svg width="16" height="14" viewBox="0 0 16 14"><path d="M1.500 2h10M1.500 5.300h13M1.500 8.600h9M1.500 12h10" stroke="#4a4d49" strokeWidth="1.900" strokeLinecap="round" /></svg>
          <Arrow $ml={4} $c="#858582" />
        </Btn>
        <Btn $w={43}>
          <svg width="16" height="16" viewBox="0 0 16 16">
            <path d="M.6.600h14.800v14.800H.600z" fill="#fff" stroke="#85888a" strokeWidth="1.200" />
            <path d="M2.500 2.500h11v11h-11z" fill="#6f8fc0" stroke="#2a4069" />
            <path d="m3 13 4-3 3 1 3.500-1v3z" fill="#34496d" /><circle cx="6" cy="6" r="1.600" fill="#e6edf7" />
          </svg>
          <Arrow $ml={4} $c="#858582" />
        </Btn>
        <Btn $w={43}>
          <svg width="16" height="16" viewBox="0 0 16 16">
            <circle cx="8" cy="8" r="7.500" fill="#f5a21d" stroke="#c5660b" />
            <ellipse cx="8" cy="5.500" rx="5.500" ry="4" fill="#fde06c" opacity=".8" />
            <ellipse cx="5.800" cy="5.500" rx="1" ry="2" fill="#4a2a06" /><ellipse cx="10.200" cy="5.500" rx="1" ry="2" fill="#4a2a06" />
            <path d="M3.500 9c1.500 4.500 7.500 4.500 9 0-2.500 1.300-6.500 1.300-9 0z" fill="#fff" stroke="#5c3305" strokeWidth=".8" />
          </svg>
          <Arrow $ml={4} $c="#858582" />
        </Btn>
      </FormatBar>
      <Grip><i /><i /><i /></Grip>
      <Editor />
      <StatusBar>
        <svg width="11" height="11" viewBox="0 0 11 11">
          {[0, 1, 2, 3].map((r) =>
            Array.from({ length: r + 1 }, (_, c) => (
              <rect key={`${r}-${c}`} x={10 - c * 3} y={r * 3} width="1" height="1" fill="#8f8e8b" />
            ))
          )}
        </svg>
      </StatusBar>
    </Win>
  );
}

export default function App() {
  return (
    <Desktop>
      <Global />
      <TopBar>
        <AppName><Fit w={122}>Thunderbird Mail</Fit></AppName>
        <Indicators>
          <Slot $w={31}>
            <svg width="19" height="16" viewBox="0 0 19 16" fill="none" strokeWidth="1.700">
              <path d="M1 6c5-5.500 12-5.500 17 0" stroke="#8d8a82" />
              <path d="M3.500 9c4-4 8-4 12 0M6 12c2-2.500 5-2.500 7 0" stroke="#dfdbd2" />
              <circle cx="9.500" cy="13.500" r="1.500" fill="#dfdbd2" />
            </svg>
          </Slot>
          <Slot $w={31}><Lang><Fit w={13}>En</Fit></Lang></Slot>
          <Slot $w={23}>
            <svg width="10" height="16" viewBox="0 0 10 16"><path d="m1 4.500 7.500 7L5 14.500v-13l3.500 3L1 11.500" fill="none" stroke="#8d8a82" strokeWidth="1.200" /></svg>
          </Slot>
          <Slot $w={27}>
            <svg width="24" height="13" viewBox="0 0 24 13">
              <rect x=".7" y=".7" width="20" height="11.600" rx="1.500" fill="none" stroke="#dfdbd2" strokeWidth="1.300" />
              <rect x="2.500" y="2.500" width="16.500" height="8" fill="#8d8a82" />
              <path d="M21 3.500h2.500v6H21z" fill="#bdb9b0" />
              <path d="m5 3 7 3 .5-1.500L17 10l-7-2.500-.5 1.500z" fill="#f2efe8" />
            </svg>
          </Slot>
          <Slot $w={86}><Fit w={74}>(0:13, 96%)</Fit></Slot>
          <Slot $w={35}>
            <svg width="18" height="12" viewBox="0 0 18 12">
              <path d="M0 4h3l4-4v12L3 8H0z" fill="#8d8a82" />
              <path d="m11.500 3.500 5 5M16.500 3.500l-5 5" stroke="#8d8a82" strokeWidth="1.500" />
            </svg>
          </Slot>
          <Slot $w={80}><Fit w={66}>2:44 अपराह्न</Fit></Slot>
          <svg width="16" height="16" viewBox="0 0 16 16" stroke="#dfdbd2" fill="none">
            <path d="M5.300 3.600a5.200 5.200 0 1 0 5.400 0" strokeWidth="1.900" />
            <path d="M8 0v8" strokeWidth="1.900" />
            <path d="m2.500 2.500 2 2M13.500 2.500l-2 2M0 8.300h3M16 8.300h-3M2.500 14l2-2M13.500 14l-2-2M8 16v-2.500" strokeWidth="2" />
          </svg>
        </Indicators>
      </TopBar>
      <Workspace>
        <Launcher />
        <Browser>
          <TabStrip>
            {tabs.map((t, i) => (
              <TabBox key={i} $active={t.active} $line={t.line}>
                {t.active && (
                  <TabShape width="203" height="29" viewBox="0 0 203 29">
                    <path d="M0 28c8-1 8-5 11-16C13 3 16 1 23 1h157c7 0 10 2 12 11 3 11 3 15 11 16z" fill="#f7f7f5" />
                  </TabShape>
                )}
                {t.icon && <TabIcon kind={t.icon} />}
                <Fit w={t.w}>{t.label}</Fit>
                <Push />
                <TabClose active={t.active} />
              </TabBox>
            ))}
            <NewTab>
              <svg width="16" height="16" viewBox="0 0 16 16"><path d="M5.500.7h5v4.800h4.800v5h-4.800v4.800h-5v-4.800H.700v-5h4.800z" fill="#b9dc55" stroke="#7fa52b" strokeWidth="1.200" /></svg>
            </NewTab>
          </TabStrip>
          <NavigationBar />
          <Site />
        </Browser>
      </Workspace>
      <ComposeWindow x={660} y={222} active />
      <ComposeWindow x={1132} y={783} />
    </Desktop>
  );
}
